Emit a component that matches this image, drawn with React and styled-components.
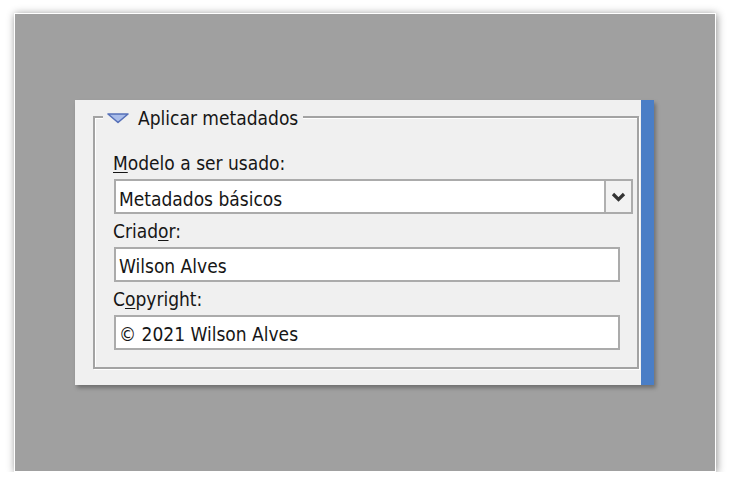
import React from "react";
import styled, { createGlobalStyle } from "styled-components";

const GlobalStyle = createGlobalStyle`
  html, body { margin: 0; padding: 0; background: #ffffff; }
  body {
    font-family: "DejaVu Sans Condensed", "DejaVu Sans", "Liberation Sans", sans-serif;
    font-stretch: condensed;
  }
  * { box-sizing: border-box; }
`;

const Frame = styled.div`
  margin: 13px 0 0 14px;
  width: 702px;
  height: 459px;
  border: 1px solid #ffffff;
  background: #a0a0a0;
  box-shadow: 1px 1px 8px rgba(0, 0, 0, 0.45);
  padding: 86px 0 0 60px;
`;

const Panel = styled.div`
  display: flex;
  width: 579px;
  box-shadow: 2px 3px 4px rgba(0, 0, 0, 0.3);
`;

const PanelBody = styled.div`
  flex: 1;
  background: #f0f0f0;
  padding: 16px 2px 16px 18px;
`;

const BlueBar = styled.div`
  width: 13px;
  background: #4a7ec6;
`;

const GroupBox = styled.div`
  position: relative;
  border: 2px solid #a3a3a3;
  box-shadow: inset 1px 1px 0 #ffffff, 1px 1px 0 #ffffff;
  padding: 34px 4px 17px 18px;
  display: flex;
  flex-direction: column;
`;

const Legend = styled.div`
  position: absolute;
  left: 8px;
  top: -11px;
  display: flex;
  align-items: center;
  gap: 9px;
  padding: 0 5px 0 4px;
  background: #f0f0f0;
  font-size: 19px;
  line-height: 22px;
  color: #161616;
`;

const Label = styled.div`
  font-size: 19px;
  line-height: 22px;
  color: #161616;
  margin-top: ${(p) => (p.$first ? "0" : "6px")};
  margin-bottom: 5px;
`;

const Key = styled.span`
  text-decoration: underline;
  text-underline-offset: 2px;
  text-decoration-thickness: 1px;
`;

const SelectBox = styled.div`
  display: flex;
  height: 35px;
  margin-left: 1px;
  border: 2px solid #ababab;
  background: #ffffff;
`;

const FieldText = styled.div`
  flex: 1;
  padding: ${(p) => (p.$low ? "6px" : "5px")} 0 0 3px;
  font-size: 19px;
  line-height: 25px;
  color: #161616;
  white-space: nowrap;
`;

const DropButton = styled.div`
  width: 27px;
  border-left: 2px solid #b0b0b0;
  background: #f2f2f2;
  display: flex;
  align-items: center;
  justify-content: center;
`;

const TextBox = styled.div`
  display: flex;
  height: 35px;
  margin: 0 13px 0 1px;
  border: 2px solid #ababab;
  background: #ffffff;
`;

function Triangle() {
  return (
    <svg width="22" height="11" viewBox="0 0 22 11">
      <polygon points="1,1 21,1 11,9.5" fill="#a9bdea" stroke="#5670b8" strokeWidth="1.6" strokeLinejoin="round" />
    </svg>
  );
}

function Chevron() {
  return (
    <svg width="15" height="10" viewBox="0 0 15 10">
      <polyline points="2,2 7.5,7.5 13,2" fill="none" stroke="#333333" strokeWidth="3.2" />
    </svg>
  );
}

export default function App() {
  return (
    <>
      <GlobalStyle />
      <Frame>
        <Panel>
          <PanelBody>
            <GroupBox>
              <Legend>
                <Triangle />
                <span>Aplicar metadados</span>
              </Legend>
              <Label $first>
                <Key>M</Key>odelo a ser usado:
              </Label>
              <SelectBox>
                <FieldText $low>Metadados básicos</FieldText>
                <DropButton>
                  <Chevron />
                </DropButton>
              </SelectBox>
              <Label>
                Criad<Key>o</Key>r:
              </Label>
              <TextBox>
                <FieldText>Wilson Alves</FieldText>
              </TextBox>
              <Label>
                C<Key>o</Key>pyright:
              </Label>
              <TextBox>
                <FieldText>© 2021 Wilson Alves</FieldText>
              </TextBox>
            </GroupBox>
          </PanelBody>
          <BlueBar />
        </Panel>
      </Frame>
    </>
  );
}
